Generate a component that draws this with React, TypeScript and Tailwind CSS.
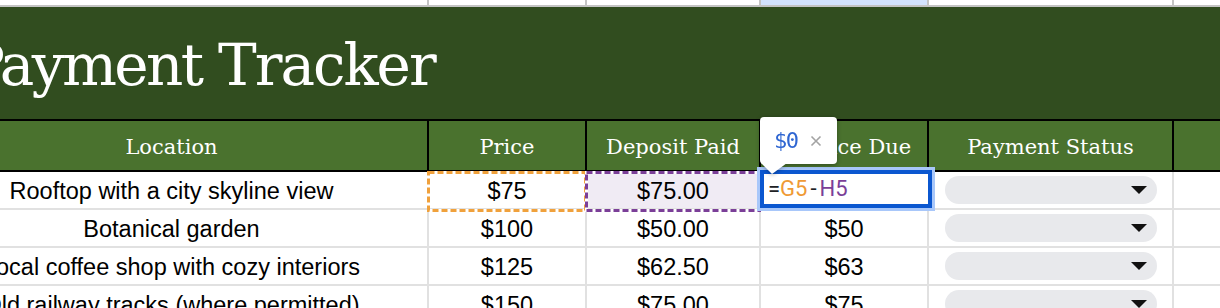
import React from "react";

const W = ["w-[513px]", "w-[158px]", "w-[174px]", "w-[168px]", "w-[245px]", "w-[200px]"];

const rows = [
  { loc: "Rooftop with a city skyline view", price: "$75", dep: "$75.00", bal: "" },
  { loc: "Botanical garden", price: "$100", dep: "$50.00", bal: "$50" },
  { loc: "Local coffee shop with cozy interiors", price: "$125", dep: "$62.50", bal: "$63" },
  { loc: "Old railway tracks (where permitted)", price: "$150", dep: "$75.00", bal: "$75" },
];

const headers = ["Location", "Price", "Deposit Paid", "Balance Due", "Payment Status", ""];

function Pill() {
  return (
    <div className="w-[212px] h-[28px] rounded-full bg-[#e8e9ec] flex items-center justify-end pr-[10px]">
      <svg width="16" height="8" viewBox="0 0 16 8">
        <polygon points="0,0 16,0 8,8" fill="#111" />
      </svg>
    </div>
  );
}

function Dashed({ color, w, h }: { color: string; w: number; h: number }) {
  return (
    <svg width={w} height={h} viewBox={`0 0 ${w} ${h}`}>
      <rect x="1.5" y="1.5" width={w - 3} height={h - 3} fill="none" stroke="#ffffff" strokeWidth="3" />
      <rect x="1.5" y="1.5" width={w - 3} height={h - 3} fill="none" stroke={color} strokeWidth="3" strokeDasharray="6 3" />
    </svg>
  );
}

export default function App() {
  return (
    <div className="relative w-[1220px] h-[308px] overflow-hidden bg-white">
      <div className="ml-[-84px] w-[1500px]">
        {/* top strip */}
        <div className="flex h-[7px] border-b-2 border-[#c4c4c4]">
          {W.map((w, i) => (
            <div
              key={i}
              className={`${w} shrink-0 border-r-2 border-[#c4c4c4] ${i === 3 ? "bg-[#d3e3fd]" : "bg-white"}`}
            />
          ))}
        </div>
        {/* title */}
        <div className="h-[114px] bg-[#314d1f] border-b-2 border-black flex items-center pl-[50px] pt-[4px]">
          <span className="text-white text-[58px] whitespace-nowrap leading-none font-['DejaVu_Serif',serif]">
            <span className="tracking-[-2.6px]">Payment</span>
            <span className="tracking-[-2px]"> Tracker</span>
          </span>
        </div>
        {/* header */}
        <div className="flex h-[51px] bg-[#4a722e] border-b-2 border-black">
          {W.map((w, i) => (
            <div
              key={i}
              className={`${w} shrink-0 border-r-2 border-black flex items-center justify-center pt-[4px] text-white text-[21px] whitespace-nowrap font-['DejaVu_Serif',serif]`}
            >
              {headers[i]}
            </div>
          ))}
        </div>
        {/* data */}
        {rows.map((r, ri) => (
          <div key={ri} className="flex h-[38px] border-b-2 border-[#e1e1e1] text-[23.5px] text-black font-['Liberation_Sans',Arial,sans-serif]">
            <div className={`${W[0]} shrink-0 border-r-2 border-[#e1e1e1] flex items-center justify-center pt-[3px] whitespace-nowrap`}>{r.loc}</div>
            <div className={`${W[1]} shrink-0 border-r-2 border-[#e1e1e1] flex items-center justify-center pt-[3px]`}>{r.price}</div>
            <div className={`${W[2]} shrink-0 border-r-2 border-[#e1e1e1] flex items-center justify-center pt-[3px] ${ri === 0 ? "bg-[#f0ebf4]" : ""}`}>{r.dep}</div>
            <div className={`${W[3]} shrink-0 border-r-2 border-[#e1e1e1] flex items-center justify-center pt-[3px]`}>{r.bal}</div>
            <div className={`${W[4]} shrink-0 border-r-2 border-[#e1e1e1] flex items-center pl-[16px]`}>
              <Pill />
            </div>
            <div className={`${W[5]} shrink-0`} />
          </div>
        ))}
      </div>

      {/* reference highlights */}
      <div className="absolute left-[427px] top-[171px]">
        <Dashed color="#f0a13c" w={160} h={41} />
      </div>
      <div className="absolute left-[585px] top-[171px]">
        <Dashed color="#7b3f98" w={176} h={41} />
      </div>

      {/* active cell editor */}
      <div className="absolute left-[757px] top-[167px] w-[178px] h-[44px] border-[3px] border-[#a8c7fa]">
        <div className="w-full h-full border-4 border-[#0b57d0] bg-white flex items-start pl-[4px] text-[22px] leading-[29px] font-['Roboto',sans-serif] text-[#202124] whitespace-nowrap">
          <span>=</span>
          <span className="text-[#ef9a35]">G5</span>
          <span className="mx-[3px]">-</span>
          <span className="text-[#7b3f98]">H5</span>
        </div>
      </div>

      {/* tooltip */}
      <div className="absolute left-[760px] top-[117px] drop-shadow-[0_1px_2px_rgba(0,0,0,0.35)]">
        <div className="w-[77px] h-[47px] bg-white rounded-[4px] flex items-center pl-[14px] gap-[12px]">
          <span className="text-[22px] font-normal text-[#2f66d2] font-['DejaVu_Sans_Mono',monospace] tracking-[-1.5px]">$0</span>
          <svg width="12" height="12" viewBox="0 0 12 12">
            <path d="M1.5 1.5 L10.5 10.5 M10.5 1.5 L1.5 10.5" stroke="#a3a3a3" strokeWidth="1.6" />
          </svg>
        </div>
        <svg className="block -mt-[1px]" width="28" height="11" viewBox="0 0 28 11">
          <polygon points="1,0 27,0 12,11" fill="#ffffff" />
        </svg>
      </div>
    </div>
  );
}
